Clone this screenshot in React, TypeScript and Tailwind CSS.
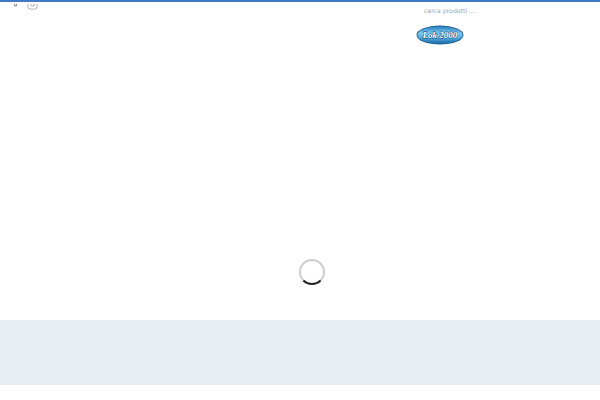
import React from 'react';
import { Facebook, Instagram } from 'lucide-react';

const Logo = () => (
  <svg width="48" height="20" viewBox="0 0 48 20">
    <defs>
      <linearGradient id="lokFill" x1="0" y1="0" x2="0" y2="1">
        <stop offset="0" stopColor="#2a80c0" />
        <stop offset="0.4" stopColor="#7cc8ee" />
        <stop offset="0.65" stopColor="#55aee0" />
        <stop offset="1" stopColor="#1b6cab" />
      </linearGradient>
    </defs>
    <ellipse cx="24" cy="10" rx="23.5" ry="9.5" fill="#24659c" />
    <ellipse cx="24" cy="10" rx="22.5" ry="8.5" fill="url(#lokFill)" />
    <text
      x="24"
      y="13"
      textAnchor="middle"
      fill="#ffffff"
      stroke="#123f66"
      strokeWidth="0.8"
      paintOrder="stroke"
      fontSize="9"
      fontStyle="italic"
      fontWeight="700"
      fontFamily="'Liberation Serif', serif"
    >
      Lok 2000
    </text>
  </svg>
);

const App = () => {
  return (
    <div className="h-[400px] w-[600px] overflow-hidden bg-white font-['DejaVu_Sans',sans-serif]">
      <div className="h-[2px] bg-[#3f78c4]" />

      <div className="flex h-[48px] items-start">
        <div className="mt-[2px] ml-[10px] flex h-[6px] items-start gap-[6px] overflow-hidden text-[#555555]">
          <Facebook className="-mt-[8px]" size={11} strokeWidth={1.5} />
          <Instagram className="-mt-[5px]" size={11} strokeWidth={1} />
        </div>
        <div className="ml-[378px] flex w-[70px] flex-col items-start">
          <p className="mt-[4px] ml-[8px] text-[6.2px] leading-[11px] font-normal whitespace-nowrap text-[#a0a0a0] [text-rendering:geometricPrecision]">
            cerca prodotti ...
          </p>
          <div className="mt-[8px]">
            <Logo />
          </div>
        </div>
      </div>

      {/* Loader */}
      <div className="flex h-[270px] items-start justify-center pt-[209px]">
        <div className="relative ml-[24px] h-[26px] w-[26px] rounded-full border-2 border-[#cccccc]">
          <div className="absolute -inset-[2px] rounded-full border-2 border-transparent border-b-[#222222]" />
        </div>
      </div>

      {/* Footer band */}
      <div className="h-[65px] bg-[#e9eef2]" />
    </div>
  );
};

export default App;
